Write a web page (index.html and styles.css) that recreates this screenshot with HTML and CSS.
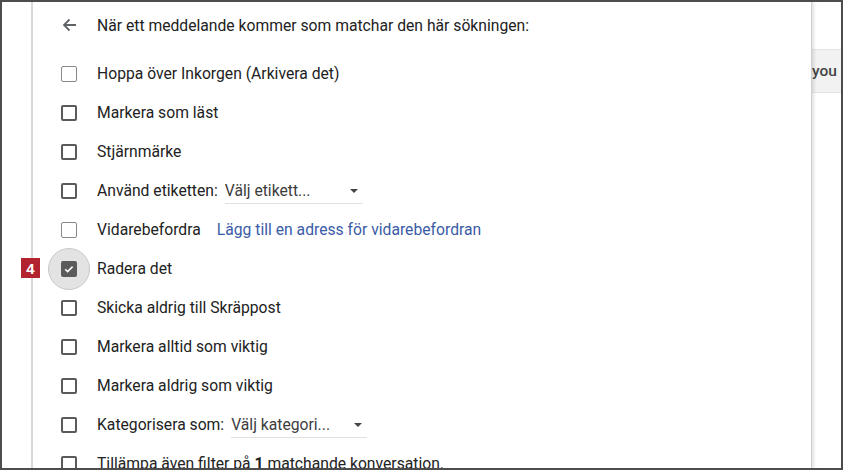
FILE: index.html
```html
<!DOCTYPE html>
<html>
<head>
<meta charset="utf-8">
<link rel="stylesheet" href="styles.css">
</head>
<body>
<div class="frame">
  <div class="gutter"></div>
  <div class="panel">
    <div class="header">
      <svg class="back" width="16" height="16" viewBox="0 0 16 16"><path d="M15 8H3.5M8.5 2.5L3 8l5.5 5.5" fill="none" stroke="#5f6368" stroke-width="1.8"/></svg>
      <span>När ett meddelande kommer som matchar den här sökningen:</span>
    </div>
    <div class="row"><span class="cb light"></span><span>Hoppa över Inkorgen (Arkivera det)</span></div>
    <div class="row"><span class="cb"></span><span>Markera som läst</span></div>
    <div class="row"><span class="cb"></span><span>Stjärnmärke</span></div>
    <div class="row"><span class="cb"></span><span>Använd etiketten:</span><span class="select sel1">Välj etikett...<i class="caret"></i></span></div>
    <div class="row"><span class="cb light"></span><span>Vidarebefordra</span><a class="link">Lägg till en adress för vidarebefordran</a></div>
    <div class="row"><span class="badge">4</span><span class="halo"><span class="cb checked"><svg width="12" height="12" viewBox="0 0 12 12"><path d="M2.2 6.2l2.4 2.4 5-5" fill="none" stroke="#fff" stroke-width="1.5"/></svg></span></span><span>Radera det</span></div>
    <div class="row"><span class="cb"></span><span>Skicka aldrig till Skräppost</span></div>
    <div class="row"><span class="cb"></span><span>Markera alltid som viktig</span></div>
    <div class="row"><span class="cb"></span><span>Markera aldrig som viktig</span></div>
    <div class="row"><span class="cb"></span><span>Kategorisera som:</span><span class="select sel2">Välj kategori...<i class="caret"></i></span></div>
    <div class="row"><span class="cb"></span><span>Tillämpa även filter på <b>1</b> matchande konversation.</span></div>
  </div>
  <div class="side">
    <div class="band">you</div>
  </div>
</div>
</body>
</html>
```
FILE: styles.css
```css
html, body {
  margin: 0;
  padding: 0;
  background: #fff;
}
.frame {
  width: 843px;
  height: 470px;
  box-sizing: border-box;
  border: 2px solid #4d4d4d;
  display: flex;
  overflow: hidden;
  font-family: Roboto, "Liberation Sans", sans-serif;
  font-size: 15.7px;
  color: #222;
}
.gutter {
  width: 29px;
  flex: none;
  background: #fff;
}
.panel {
  width: 781px;
  flex: none;
  border-left: 2px solid #d8d8d8;
  border-right: 1px solid #cfcfcf;
  box-shadow: 2px 0 3px rgba(0,0,0,0.12);
  padding: 6px 0 0 28px;
  box-sizing: border-box;
  position: relative;
  z-index: 1;
  background: #fff;
}
.header {
  height: 34px;
  display: flex;
  align-items: center;
  margin-bottom: 12px;
}
.back {
  margin-right: 20px;
}
.row {
  height: 39px;
  display: flex;
  align-items: center;
  position: relative;
  white-space: nowrap;
}
.cb {
  width: 16px;
  height: 16px;
  box-sizing: border-box;
  border: 2px solid #5a5a5a;
  border-radius: 2px;
  margin-right: 20px;
  flex: none;
  display: flex;
  align-items: center;
  justify-content: center;
}
.cb.light {
  border-color: #8a8a8a;
  border-width: 1.5px;
}
.cb.checked {
  background: #5a5a5a;
  border-color: #5a5a5a;
  margin-right: 0;
}
.halo {
  width: 42px;
  height: 42px;
  border-radius: 50%;
  background: #e3e3e3;
  border: 1px solid #c9c9c9;
  box-sizing: border-box;
  display: flex;
  align-items: center;
  justify-content: center;
  margin-left: -13px;
  margin-right: 7px;
  flex: none;
}
.badge {
  position: absolute;
  left: -40px;
  top: 9px;
  width: 19px;
  height: 20px;
  background: #b2232f;
  color: #fff;
  font-weight: bold;
  font-family: "Liberation Sans", Arial, sans-serif;
  font-size: 15px;
  display: flex;
  align-items: center;
  justify-content: center;
}
.link {
  color: #3a5ba6;
  margin-left: 16px;
}
.select {
  position: relative;
  padding-bottom: 3px;
  border-bottom: 1px solid #e0e0e0;
  color: #3c3c3c;
  display: inline-block;
  top: 2px;
}
.sel1 { width: 138px; margin-left: 7px; }
.sel2 { width: 136px; margin-left: 7px; }
.caret {
  position: absolute;
  right: 5px;
  top: 8px;
  width: 0;
  height: 0;
  border-left: 4px solid transparent;
  border-right: 4px solid transparent;
  border-top: 4px solid #444;
}
.side {
  flex: 1;
  background: #fff;
  padding-top: 47px;
}
.band {
  height: 42px;
  background: #f2f2f2;
  border-top: 1px solid #e4e4e4;
  border-bottom: 1px solid #e4e4e4;
  color: #444;
  font-weight: 500;
  font-size: 15.5px;
  display: flex;
  align-items: center;
}
```
